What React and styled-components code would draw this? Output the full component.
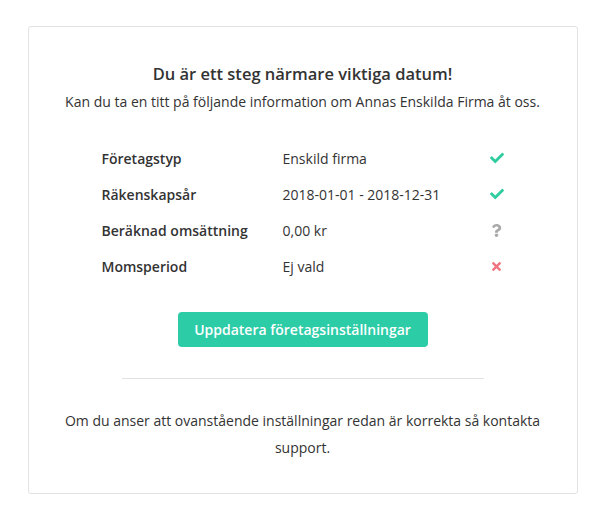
import styled, { createGlobalStyle } from "styled-components";
import { FaCheck, FaQuestion, FaTimes } from "react-icons/fa";

const GlobalStyle = createGlobalStyle`
  body {
    margin: 0;
    background: #ffffff;
    font-family: "Open Sans", "Liberation Sans", sans-serif;
    color: #333333;
  }
`;

const Page = styled.div`
  padding: 26px 0 0;
  display: flex;
  justify-content: center;
`;

const Card = styled.div`
  width: 550px;
  box-sizing: border-box;
  border: 1px solid #e3e3e3;
  border-radius: 3px;
  padding: 36px 30px 32px;
  display: flex;
  flex-direction: column;
  align-items: center;
`;

const Title = styled.h2`
  margin: 0;
  font-size: 16.5px;
  line-height: 22px;
  font-weight: 600;
`;

const Lead = styled.p`
  margin: 7px 0 0;
  font-size: 14px;
  line-height: 20px;
  white-space: nowrap;
`;

const Table = styled.div`
  width: 403px;
  margin-top: 28px;
  margin-left: 1px;
  display: flex;
  flex-direction: column;
`;

const Row = styled.div`
  height: 36px;
  display: grid;
  grid-template-columns: 181px 1fr 16px;
  align-items: center;
  font-size: 14px;
`;

const Label = styled.span`
  font-weight: 600;
`;

const Value = styled.span``;

const Status = styled.span`
  display: flex;
  justify-content: center;
  color: ${(p) => p.$color};
  font-size: ${(p) => p.$size || 14}px;
`;

const Button = styled.button`
  margin-top: 28px;
  width: 250px;
  height: 35px;
  border: none;
  border-radius: 4px;
  background: #2ccca7;
  color: #ffffff;
  font-family: inherit;
  font-size: 14px;
  font-weight: 600;
  cursor: pointer;
`;

const Divider = styled.hr`
  width: 362px;
  margin: 31px 0 0;
  border: none;
  border-top: 1px solid #e2e2e2;
`;

const Footer = styled.p`
  margin: 28px 0 0;
  max-width: 485px;
  text-align: center;
  font-size: 14px;
  line-height: 27px;
`;

const rows = [
  { label: "Företagstyp", value: "Enskild firma", status: "ok" },
  { label: "Räkenskapsår", value: "2018-01-01 - 2018-12-31", status: "ok" },
  { label: "Beräknad omsättning", value: "0,00 kr", status: "unknown" },
  { label: "Momsperiod", value: "Ej vald", status: "missing" },
];

const StatusIcon = ({ status }) => {
  if (status === "ok")
    return (
      <Status $color="#2ecc9f">
        <FaCheck />
      </Status>
    );
  if (status === "unknown")
    return (
      <Status $color="#a9a9a9" $size={13}>
        <FaQuestion />
      </Status>
    );
  return (
    <Status $color="#f07480" $size={13}>
      <FaTimes />
    </Status>
  );
};

const App = () => {
  return (
    <>
      <GlobalStyle />
      <Page>
        <Card>
          <Title>Du är ett steg närmare viktiga datum!</Title>
          <Lead>
            Kan du ta en titt på följande information om Annas Enskilda Firma åt oss.
          </Lead>
          <Table>
            {rows.map((r) => (
              <Row key={r.label}>
                <Label>{r.label}</Label>
                <Value>{r.value}</Value>
                <StatusIcon status={r.status} />
              </Row>
            ))}
          </Table>
          <Button>Uppdatera företagsinställningar</Button>
          <Divider />
          <Footer>
            Om du anser att ovanstående inställningar redan är korrekta så kontakta support.
          </Footer>
        </Card>
      </Page>
    </>
  );
};

export default App;
